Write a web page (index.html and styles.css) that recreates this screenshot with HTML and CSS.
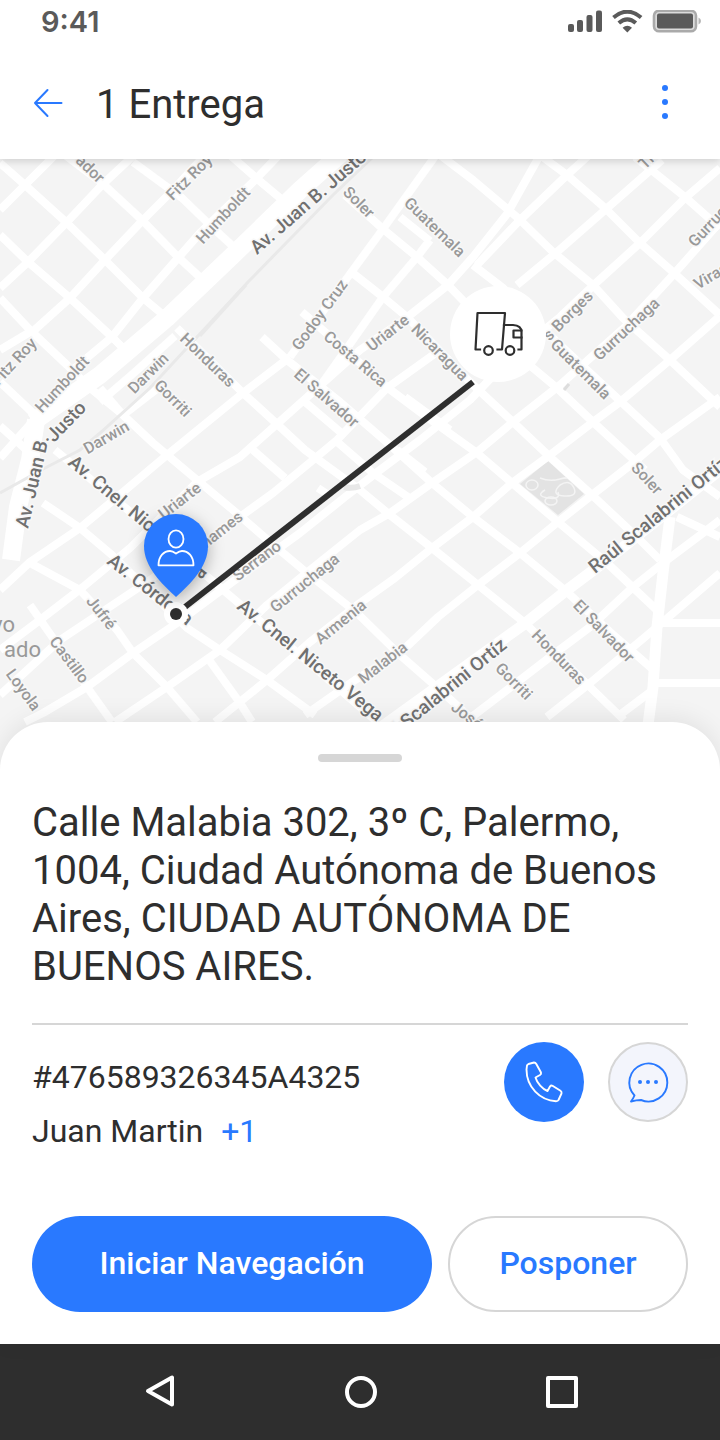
FILE: index.html
```html
<!DOCTYPE html>
<html lang="es">
<head>
<meta charset="utf-8">
<meta name="viewport" content="width=device-width, initial-scale=1">
<title>1 Entrega</title>
<link rel="stylesheet" href="styles.css">
</head>
<body>
<div class="app">
  <header class="top">
    <div class="status">
      <span class="clock">9:41</span>
      <svg class="status-icons" width="134" height="24" viewBox="0 0 134 24" aria-hidden="true">
        <g fill="#5a5a5a">
          <rect x="1" y="14" width="6" height="8" rx="2"/>
          <rect x="10" y="10" width="6" height="12" rx="2"/>
          <rect x="19.500" y="5" width="6" height="17" rx="2"/>
          <rect x="29" y="0.500" width="6" height="21.500" rx="2"/>
          <path d="M60.300 22.500 55.600 17.800Q60.300 13.800 65 17.800Z"/>
        </g>
        <g fill="none" stroke="#5a5a5a" stroke-width="4">
          <path d="M46.500 7.500Q60.300-4.200 74.100 7.500"/>
          <path d="M51.800 13Q60.300 5.600 68.800 13"/>
        </g>
        <rect x="87" y="0.800" width="42" height="20.500" rx="5" fill="#dcdcdc" stroke="#aaa" stroke-width="2.600"/>
        <rect x="90" y="3.500" width="36" height="15" rx="2" fill="#5a5a5a"/>
        <path d="M131.500 7.500q2.500 1 2.500 3.500t-2.500 3.500z" fill="#b5b5b5"/>
      </svg>
    </div>
    <div class="bar">
      <button class="icon-btn" aria-label="Volver">
        <svg width="32" height="32" viewBox="0 0 32 32" fill="none" stroke="#2979ff" stroke-width="2" stroke-linecap="round" stroke-linejoin="round"><path d="M29.500 17H3M15.500 4 3 17l12.500 13"/></svg>
      </button>
      <h1 class="title">1 Entrega</h1>
      <button class="icon-btn more" aria-label="Más opciones">
        <svg width="14" height="36" viewBox="0 0 14 36" fill="#2979ff"><circle cx="7" cy="4" r="3"/><circle cx="7" cy="18" r="3"/><circle cx="7" cy="32" r="3"/></svg>
      </button>
    </div>
  </header>

  <main class="main">
    <svg class="map" viewBox="0 159 720 611" role="img" aria-label="Mapa de la entrega">
      <rect x="0" y="159" width="720" height="611" fill="#f4f4f4"/>
      <path d="M520 484 548 461 584 494 558 515Z" fill="#e3e3e3"/>
      <g fill="none" stroke="#f4f4f4" stroke-width="1.500">
        <path d="M540 478q10 4 20 1t18 2M545 490q-10 6 3 8t10-6M560 485q10-6 14 3t-10 8-4-11"/>
        <ellipse cx="532" cy="485" rx="6" ry="5"/><ellipse cx="551" cy="501" rx="6" ry="4"/>
      </g>
      <g class="roads">
        <path d="M0 163 25 185 67 223 105 260 143 298 167 318"/>
        <path d="M65 155 102 183 142 220 178 257 203 280"/>
        <path d="M133 162 182 198 213 228 237 250"/>
        <path d="M230 155 255 177 292 208"/>
        <path d="M0 235 28 262 70 298 112 337 125 350"/>
        <path d="M0 298 30 330 67 365 90 388 123 415 153 443 197 480 233 510 270 542 307 573 357 613 400 655 440 690 475 722"/>
        <path d="M0 382 35 415"/>
        <path d="M0 426 40 462"/>
        <path d="M0 210 25 185 55 155M0 288 28 262 67 222 102 185 134 155M30 334 70 298 104 261 142 221 175 188 205 155"/>
        <path d="M70 372 112 337 143 298 178 258 200 233 253 182 279 155"/>
        <path d="M0 458 34 420 67 387M0 350 30 332"/>
        <path d="M100 402 135 372 175 336M100 388 123 415 158 388"/>
        <path d="M177 328 243 393 277 424 305 450 360 490 390 515 432 548 478 585 525 623 593 690 624 720"/>
        <path d="M262 337 287 360 340 402 390 445 432 483 473 517 520 553 567 592 610 632 657 673"/>
        <path d="M302 312 340 345 388 388 420 412 477 453 512 483 558 522 607 563 660 613"/>
        <path d="M350 271 383 297 407 317 470 382 513 422 550 457 592 495 640 540 660 560"/>
        <path d="M345 195 383 229 417 257 448 285 480 318 533 368 557 388 593 422 645 470M677 517 720 537"/>
        <path d="M400 217 430 241M473 265 503 288 560 345 617 398 660 438 683 470 720 497"/>
        <path d="M440 155 473 180 518 218 553 252 593 285 623 318 670 360 720 407"/>
        <path d="M540 155 567 175 605 208 640 243 673 272 720 315M635 157 685 197 720 228"/>
        <path d="M436 155 383 229 350 274 290 357"/>
        <path d="M430 240 417 257 383 297 350 344 323 382"/>
        <path d="M405 319 448 285 473 257 507 214 540 155"/>
        <path d="M477 265 518 222 567 175 589 155M517 285 557 252 605 210 662 160"/>
        <path d="M0 590 30 562 80 528 110 503 167 455 243 393 290 357"/>
        <path d="M0 650 40 620 83 587 130 548 197 482 240 457 277 424 323 383 360 350 405 319"/>
        <path d="M0 695 60 640 150 580 215 535 273 493 313 460 337 440 387 388 440 350"/>
        <path d="M25 722 43 713 87 687 133 653 177 623 235 580 300 533 345 497 380 470 420 440 470 400 513 355 560 317 597 282 640 243 685 198 720 168"/>
        <path d="M115 722 167 687 220 650 267 605 310 570 360 530 390 513 432 483 477 452 513 422 560 385 625 327 673 275 720 222"/>
        <path d="M215 722 267 680 310 642 360 603 395 578 432 548 473 517 512 483 550 455 593 422 620 402 670 360 720 316"/>
        <path d="M305 715 355 680 400 653 438 617 478 585 520 553 558 522 592 495 633 463 660 440 713 402 720 397"/>
        <path d="M465 722 507 690 550 657 590 627 633 587 663 563 703 533 720 520"/>
        <path d="M547 717 590 683 657 627 720 573M617 717 653 690"/>
        <path d="M43 503 80 528 112 555 187 628 220 650 267 680 315 715"/>
        <path d="M30 563 80 590 117 630 133 653 167 687 197 722M30 605 87 687 112 722M207 657 240 703 252 722"/>
        <path d="M373 473 408 497M397 450 425 472M405 397 450 430M305 402 345 436M335 440 373 473M253 450 285 478M318 488 330 496"/>
        <path d="M55 450 110 495 170 545 235 600 300 655 375 720"/>
        <path d="M657 623H720M653 683H720"/>
      </g>
      <g class="roads avenue">
        <path d="M33 422 100 375 167 318 233 255 300 190 345 150"/>
        <path d="M36 420 30 460 18 507 11 560"/>
      </g>
      <g class="roads wide">
        <path d="M380 728 523 625 567 590 607 560 720 470"/>
        <path d="M670 517 663 573 657 627 653 687 648 725"/>
      </g>
      <path d="M0 493 45 468 80 450 100 433 150 388 197 337 248 282 333 195 375 155" fill="none" stroke="#e9e9e9" stroke-width="3"/>
      <path d="M200 336 246 285" stroke="#e9e9e9" stroke-width="3"/>
      <path d="M564 390 569 384" stroke="#ddd" stroke-width="3"/>
      <path d="M344 487q8 2 16-1" fill="none" stroke="#e8e8e8" stroke-width="6"/>

      <g class="labels">
        <text transform="translate(98 184) rotate(44)" text-anchor="end">ador</text>
        <text transform="translate(193 181) rotate(-45)" text-anchor="middle">Fitz Roy</text>
        <text transform="translate(227 219) rotate(-47)" text-anchor="middle">Humboldt</text>
        <text transform="translate(355 206) rotate(45)" text-anchor="middle">Soler</text>
        <text transform="translate(431 231) rotate(44)" text-anchor="middle">Guatemala</text>
        <text transform="translate(645 170) rotate(-44)">Th</text>
        <text transform="translate(695 248) rotate(-47)">Gurruc</text>
        <text transform="translate(698 290) rotate(-31)">Viras</text>
        <text transform="translate(18 365) rotate(-47)" text-anchor="middle">Fitz Roy</text>
        <text transform="translate(66 388) rotate(-47)" text-anchor="middle">Humboldt</text>
        <text transform="translate(152 377) rotate(-45)" text-anchor="middle">Darwin</text>
        <text transform="translate(204 364) rotate(44)" text-anchor="middle">Honduras</text>
        <text transform="translate(169 402) rotate(45)" text-anchor="middle">Gorriti</text>
        <text transform="translate(109 442) rotate(-30)" text-anchor="middle">Darwin</text>
        <text transform="translate(324 318) rotate(-54)" text-anchor="middle">Godoy Cruz</text>
        <text transform="translate(352 363) rotate(40)" text-anchor="middle">Costa Rica</text>
        <text transform="translate(323 402) rotate(41)" text-anchor="middle">El Salvador</text>
        <text transform="translate(391 337) rotate(-38)" text-anchor="middle">Uriarte</text>
        <text transform="translate(436 356) rotate(45)" text-anchor="middle">Nicaragua</text>
        <text transform="translate(594 297) rotate(-45)" text-anchor="end">s Borges</text>
        <text transform="translate(630 333) rotate(-43)" text-anchor="middle">Gurruchaga</text>
        <text transform="translate(577 373) rotate(45)" text-anchor="middle">Guatemala</text>
        <text transform="translate(643 482) rotate(47)" text-anchor="middle">Soler</text>
        <text transform="translate(183 505) rotate(-38)" text-anchor="middle">Uriarte</text>
        <text transform="translate(244 519) rotate(-38)" text-anchor="end">Thames</text>
        <text transform="translate(260 565) rotate(-37)" text-anchor="middle">Serrano</text>
        <text transform="translate(308 587) rotate(-39)" text-anchor="middle">Gurruchaga</text>
        <text transform="translate(344 626) rotate(-39)" text-anchor="middle">Armenia</text>
        <text transform="translate(386 667) rotate(-38)" text-anchor="middle">Malabia</text>
        <text transform="translate(97 616) rotate(52)" text-anchor="middle">Jufré</text>
        <text transform="translate(65 663) rotate(53)" text-anchor="middle">Castillo</text>
        <text transform="translate(19 693) rotate(54)" text-anchor="middle">Loyola</text>
        <text transform="translate(600 635) rotate(46)" text-anchor="middle">El Salvador</text>
        <text transform="translate(555 661) rotate(46)" text-anchor="middle">Honduras</text>
        <text transform="translate(510 685) rotate(45)" text-anchor="middle">Gorriti</text>
        <text transform="translate(450 709) rotate(38)">José</text>
      </g>
      <g class="labels avenue-labels">
        <text transform="translate(257 255) rotate(-41)">Av. Juan B. Justo</text>
        <text transform="translate(28 529) rotate(-77)">Av. Juan B.</text>
        <text transform="translate(54 443) rotate(-46)">Justo</text>
        <text transform="translate(67 464) rotate(40)">Av. Cnel. Nic</text>
        <text transform="translate(106 563) rotate(38)">Av. Córdoba</text>
        <text transform="translate(201 580) rotate(-50)">a</text>
        <text transform="translate(236 608) rotate(39)">Av. Cnel. Niceto Vega</text>
        <text transform="translate(595 574) rotate(-39)">Raúl Scalabrini Ortíz</text>
        <text transform="translate(508 647) rotate(-39)" text-anchor="end">l Scalabrini Ortíz</text>
      </g>
      <g class="area-label">
        <text x="15" y="632" text-anchor="end">vo</text>
        <text x="41" y="657" text-anchor="end">ado</text>
      </g>

      <path d="M176 614 473 382" stroke="#2e2e2e" stroke-width="6"/>
      <circle cx="498" cy="334" r="48" fill="#fff"/>
      <g fill="none" stroke="#2e2e2e" stroke-width="2.200" stroke-linecap="square" stroke-linejoin="round">
        <path d="M480 349.500H475.500L477.500 313H505L502 349.500H497.500"/>
        <path d="M504 325H513Q521.500 325.500 521.500 332V349.500H518.500"/>
        <path d="M521.500 330.500H513.500V337.500H521.500"/>
        <circle cx="488.500" cy="350.500" r="4.300"/><circle cx="510" cy="350.500" r="4.300"/>
      </g>
      <circle cx="176" cy="614" r="12" fill="#fff"/>
      <circle cx="176" cy="614" r="6" fill="#2e2e2e"/>
      <path class="pin" d="M176 597C162 584 144 567 144 546A32 32 0 0 1 208 546C208 567 190 584 176 597Z" fill="#2979ff"/>
      <g fill="none" stroke="#fff" stroke-width="1.800" stroke-linejoin="round">
        <ellipse cx="176" cy="539" rx="7.500" ry="8.700"/>
        <path d="M158.500 565.300C158.500 556 164 551 170 551Q172.500 551 176 553.500Q179.500 551 182 551C188 551 193.500 556 193.500 565.300Z"/>
      </g>
    </svg>

    <section class="sheet">
      <div class="handle"></div>
      <p class="address">Calle Malabia 302, 3º C, Palermo, 1004, Ciudad Autónoma de Buenos Aires, CIUDAD AUTÓNOMA DE BUENOS AIRES.</p>
      <div class="contact">
        <div class="details">
          <p class="line">#476589326345A4325</p>
          <p class="line person"><span>Juan Martin</span><a class="extra" href="#">+1</a></p>
        </div>
        <div class="actions">
          <button class="round call" aria-label="Llamar">
            <svg width="80" height="80" viewBox="0 0 80 80" fill="none" stroke="#fff" stroke-width="1.900" stroke-linejoin="round"><path d="M24.500 22 30 20.500Q31.500 20.500 32.300 22L37 30.500Q37.500 32 36 33L31.500 35.500C33 41 38.500 47 43.500 49L46 44.500Q47 43 48.500 43.800L56.500 48.700Q58 49.700 57.500 51.500L54.500 58Q54 59.200 52 59.200C36 58.500 22.500 45 22.500 27.500L23 23.500Q23.500 22.500 24.500 22Z"/></svg>
          </button>
          <button class="round chat" aria-label="Enviar mensaje">
            <svg width="76" height="76" viewBox="2 2 76 76" fill="none" stroke="#2979ff" stroke-width="1.900" stroke-linejoin="round"><path d="M26.500 53.500A19 19 0 1 1 33 58Q28.500 58 23 59.500Q25.500 56 26.500 53.500Z"/><g fill="#2979ff" stroke="none"><circle cx="32" cy="40" r="2"/><circle cx="40" cy="40" r="2"/><circle cx="48" cy="40" r="2"/></g></svg>
          </button>
        </div>
      </div>
      <div class="cta">
        <button class="btn primary">Iniciar Navegación</button>
        <button class="btn secondary">Posponer</button>
      </div>
    </section>
  </main>

  <nav class="system" aria-label="Sistema">
    <button class="icon-btn" aria-label="Atrás"><svg width="36" height="36" viewBox="0 0 36 36" fill="none" stroke="#fff" stroke-width="4" stroke-linejoin="round"><path d="M6 17 30 3.500V30.500Z"/></svg></button>
    <button class="icon-btn" aria-label="Inicio"><svg width="36" height="36" viewBox="0 0 36 36" fill="none" stroke="#fff" stroke-width="4"><circle cx="18" cy="18" r="14"/></svg></button>
    <button class="icon-btn" aria-label="Recientes"><svg width="36" height="36" viewBox="0 0 36 36" fill="none" stroke="#fff" stroke-width="4" stroke-linejoin="round"><path d="M4 4H32V32H4Z"/></svg></button>
  </nav>
</div>
</body>
</html>
```
FILE: styles.css
```css
* {
  box-sizing: border-box;
}

body {
  margin: 0;
  background: #fff;
  color: #2e2e2e;
  font-family: Roboto, "Liberation Sans", sans-serif;
}

h1,
p {
  margin: 0;
}

button {
  padding: 0;
  border: 0;
  background: none;
  font: inherit;
  cursor: pointer;
}

.app {
  display: flex;
  flex-direction: column;
  min-height: 100vh;
}

.top {
  position: relative;
  z-index: 1;
  background: #fff;
  box-shadow: 0 2px 8px rgba(0, 0, 0, 0.16);
}

.status {
  display: flex;
  align-items: center;
  justify-content: space-between;
  height: 44px;
  padding: 0 19px 0 41px;
}

.clock {
  color: #5a5a5a;
  font-family: Inter, sans-serif;
  font-size: 29px;
  font-weight: 600;
  line-height: 44px;
}

.bar {
  display: flex;
  align-items: center;
  gap: 32px;
  height: 115px;
  padding: 0 48px 0 32px;
}

.icon-btn {
  display: flex;
  align-items: center;
  justify-content: center;
}

.title {
  flex: 1;
  padding-top: 6px;
  font-size: 40px;
  font-weight: 400;
  line-height: 48px;
}

.main {
  display: flex;
  flex: 1;
  flex-direction: column;
}

.map {
  display: block;
  width: 100%;
  height: auto;
}

.roads {
  fill: none;
  stroke: #fff;
  stroke-linejoin: round;
  stroke-width: 8px;
}

.wide {
  stroke-width: 11px;
}

.avenue {
  stroke-width: 18px;
}

.labels text {
  fill: #999;
  font-size: 16px;
  font-weight: 500;
  paint-order: stroke;
  stroke: #f8f8f8;
  stroke-width: 3px;
}

.avenue-labels text {
  fill: #707070;
  font-size: 19px;
}

.area-label text {
  fill: #999;
  font-size: 22px;
}

.pin {
  filter: drop-shadow(0 4px 8px rgba(0, 0, 0, 0.3));
}

.sheet {
  position: relative;
  display: flex;
  flex: 1;
  flex-direction: column;
  margin-top: -48px;
  padding: 32px;
  border-radius: 48px 48px 0 0;
  background: #fff;
  box-shadow: 0 -4px 24px rgba(0, 0, 0, 0.08);
}

.handle {
  width: 84px;
  height: 8px;
  margin: 0 auto 37px;
  border-radius: 4px;
  background: #d6d6d6;
}

.address {
  padding-bottom: 32px;
  border-bottom: 2px solid #d6d6d6;
  font-size: 40px;
  line-height: 48px;
}

.contact {
  display: flex;
  justify-content: space-between;
  gap: 24px;
  padding: 17px 0 64px;
}

.details {
  display: flex;
  flex-direction: column;
  gap: 14px;
  padding-top: 15px;
}

.line {
  font-size: 32px;
  line-height: 40px;
}

.person {
  display: flex;
  gap: 18px;
}

.extra {
  color: #2979ff;
  text-decoration: none;
}

.actions {
  display: flex;
  gap: 24px;
}

.round {
  display: flex;
  align-items: center;
  justify-content: center;
  width: 80px;
  height: 80px;
  border-radius: 50%;
}

.call {
  background: #2979ff;
}

.chat {
  border: 2px solid #d6d6d6;
  background: #f3f5fc;
}

.cta {
  display: grid;
  grid-template-columns: 5fr 3fr;
  gap: 16px;
  margin-top: auto;
}

.btn {
  height: 96px;
  padding-bottom: 2px;
  border-radius: 48px;
  font-size: 32px;
  font-weight: 500;
}

.primary {
  background: #2979ff;
  color: #fff;
}

.secondary {
  border: 2px solid #d6d6d6;
  background: #fff;
  color: #2979ff;
}

.system {
  display: flex;
  align-items: center;
  justify-content: space-between;
  height: 96px;
  padding: 0 140px 0 142px;
  background: #2e2e2e;
}
```
